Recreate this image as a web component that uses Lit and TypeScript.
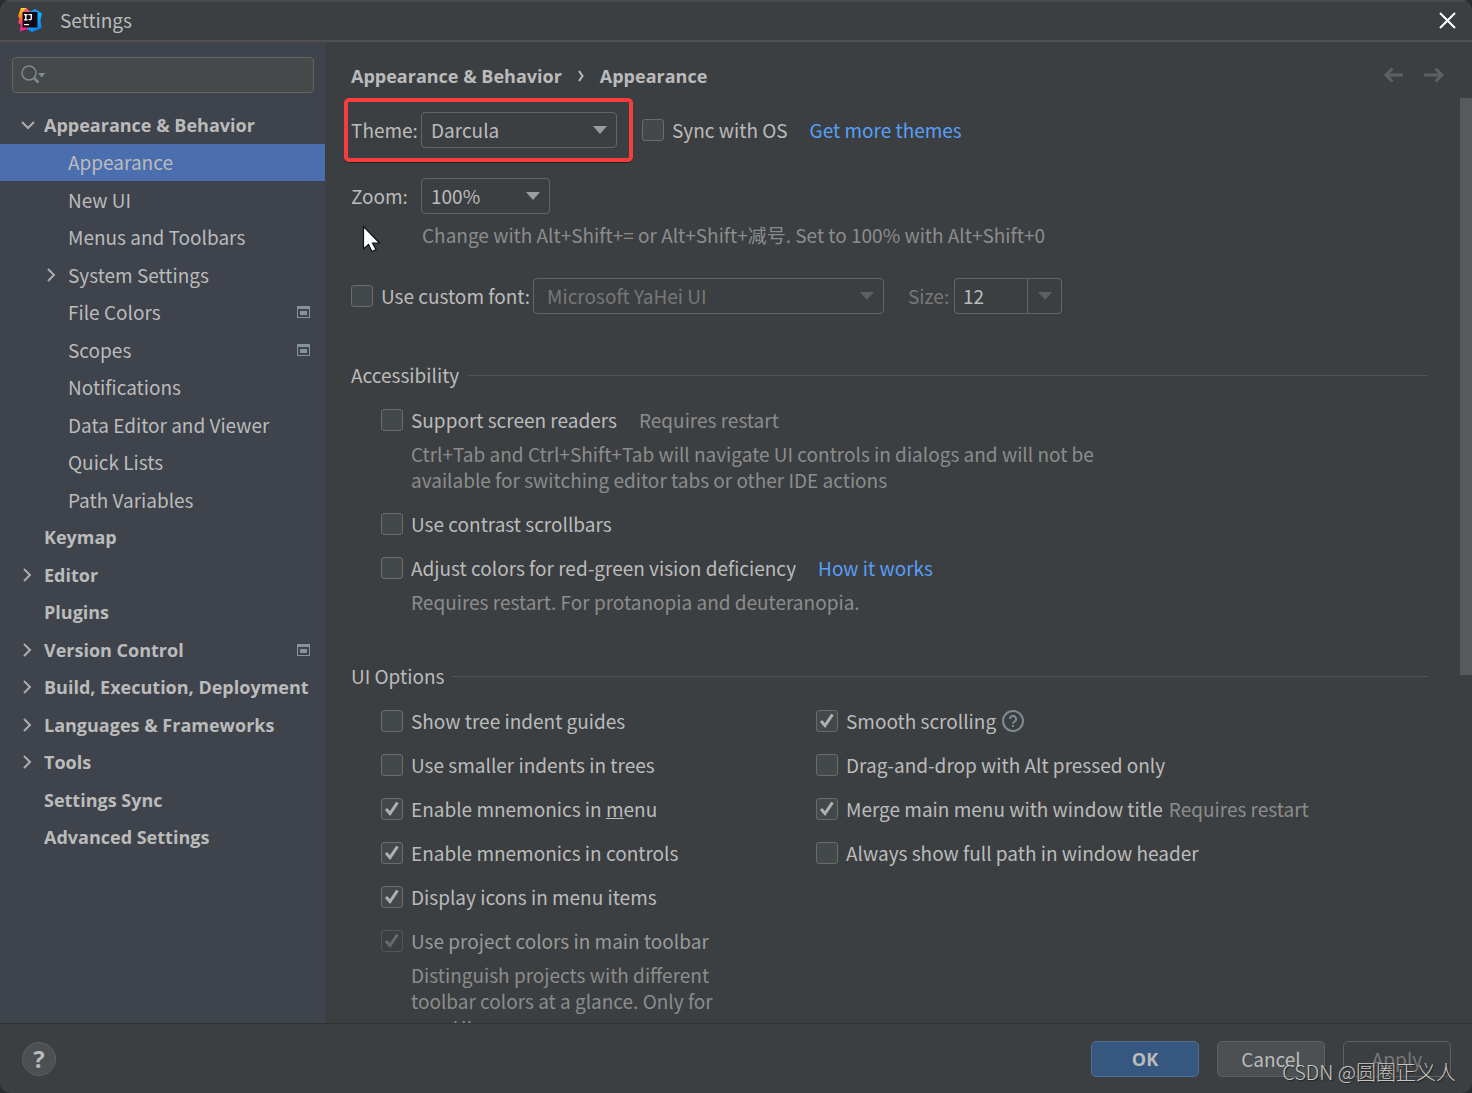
import { LitElement, html, css, svg, nothing, type TemplateResult } from "lit";
import { customElement, state } from "lit/decorators.js";
import { classMap } from "lit/directives/class-map.js";

interface TreeItem {
  label: string;
  child?: boolean;
  arrow?: "open" | "closed";
  project?: boolean;
}

const TREE: TreeItem[] = [
  { label: "Appearance & Behavior", arrow: "open" },
  { label: "Appearance", child: true },
  { label: "New UI", child: true },
  { label: "Menus and Toolbars", child: true },
  { label: "System Settings", child: true, arrow: "closed" },
  { label: "File Colors", child: true, project: true },
  { label: "Scopes", child: true, project: true },
  { label: "Notifications", child: true },
  { label: "Data Editor and Viewer", child: true },
  { label: "Quick Lists", child: true },
  { label: "Path Variables", child: true },
  { label: "Keymap" },
  { label: "Editor", arrow: "closed" },
  { label: "Plugins" },
  { label: "Version Control", arrow: "closed", project: true },
  { label: "Build, Execution, Deployment", arrow: "closed" },
  { label: "Languages & Frameworks", arrow: "closed" },
  { label: "Tools", arrow: "closed" },
  { label: "Settings Sync" },
  { label: "Advanced Settings" },
];

const logo = html`<svg class="logo" viewBox="0 0 24 24" aria-hidden="true">
  <defs>
    <linearGradient id="warm" x1="0" y1="0" x2="0" y2="1">
      <stop offset="0" stop-color="#fdd835" />
      <stop offset="0.35" stop-color="#fc801d" />
      <stop offset="0.6" stop-color="#ff3d6b" />
      <stop offset="1" stop-color="#fe2cc2" />
    </linearGradient>
    <linearGradient id="cool" x1="0" y1="0" x2="0.4" y2="1">
      <stop offset="0" stop-color="#3b7df0" />
      <stop offset="0.5" stop-color="#09b5ff" />
      <stop offset="1" stop-color="#0787f5" />
    </linearGradient>
  </defs>
  <path d="M3 0H8L12 4V22L7 21 2 23.500 3 17 0 14.500 1.500 11 0 8z" fill="url(#warm)" />
  <path d="M11 4 17 1l7 4.500L22.500 12 23.500 20 14 24 10 21.500z" fill="url(#cool)" />
  <path d="M3 17 9 19l2 1.500L7 21.500 2 23.500z" fill="#f62a8a" />
  <path d="M8 0 12 4 9 6 5 4z" fill="#fa4f7a" />
  <rect x="4.500" y="4" width="15" height="15.500" fill="#120a10" />
  <path d="M6 6h3.600v1.200H8.500v4H9.600v1.200H6v-1.200h1.100v-4H6z" fill="#fff" />
  <path d="M10.500 6H14v4.200c0 1.500-.8 2.200-2 2.200-.8 0-1.400-.3-1.900-.8l.8-.9c.3.300.6.400.9.400.500 0 .8-.3.800-.9V7.200h-2.100z" fill="#fff" />
  <rect x="6" y="16" width="5" height="1.200" fill="#fff" />
</svg>`;

const chevron = (open: boolean) => html`<svg class="chevron" viewBox="0 0 16 16" aria-hidden="true">
  ${open ? svg`<path d="M2 5 8 11 14 5" />` : svg`<path d="M4 2 10 8 4 14" />`}
</svg>`;

const projectIcon = html`<svg class="project" viewBox="0 0 13 12" role="img" aria-label="For current project">
  <path fill-rule="evenodd" d="M0 0h13v12H0zM1 3v8h11V3z" />
  <rect x="3" y="5" width="7" height="4" />
</svg>`;

const dropArrow = html`<svg class="drop" viewBox="0 0 14 8" aria-hidden="true"><path d="M0 0h14L7 8z" /></svg>`;

@customElement("app-root")
export class AppRoot extends LitElement {
  @state() private selected = "Appearance";

  static styles = css`
    :host {
      display: block;
      height: 100vh;
      min-height: 600px;
      position: relative;
      overflow: hidden;
      background: #2b2b2b;
      color: #bbbbbb;
      font: 19px/26px "Noto Sans CJK SC", "Open Sans", sans-serif;
    }
    *, *::before, *::after { box-sizing: border-box; }
    button, input, select { font: inherit; color: inherit; margin: 0; }
    button { padding: 0; border: 0; background: none; }
    a { color: #589df6; text-decoration: none; }
    svg { display: block; flex: none; }

    .window {
      height: 100%;
      display: grid;
      grid-template: 42px minmax(0, 1fr) 70px / 325px minmax(0, 1fr);
      background: #3c3f41;
      border-radius: 10px;
      overflow: hidden;
    }
    .titlebar {
      grid-column: 1 / -1;
      display: flex;
      align-items: center;
      gap: 18px;
      padding: 0 16px 2px 18px;
      border-top: 2px solid #4a4a4a;
      border-bottom: 2px solid #515151;
    }
    .titlebar h1 { flex: 1; margin: 0; font: inherit; }
    .logo { width: 24px; height: 24px; }
    .close { width: 17px; height: 17px; }
    .close svg { width: 17px; height: 17px; fill: none; stroke: #ffffff; stroke-width: 2; }

    .sidebar { background: #3e434c; padding-top: 15px; overflow: hidden; }
    .search {
      display: flex;
      align-items: center;
      height: 36px;
      margin: 0 11px 13px 12px;
      padding-left: 8px;
      border: 1px solid #646464;
      border-radius: 4px;
      background: #45494a;
    }
    .search svg { width: 25px; height: 20px; }
    .search input { flex: 1; min-width: 0; border: 0; outline: 0; background: none; }
    .tree {
      display: grid;
      grid-auto-rows: 1fr;
      height: 750px;
      margin: 0;
      padding: 0;
      list-style: none;
    }
    .node {
      display: flex;
      align-items: center;
      width: 100%;
      height: 100%;
      padding: 0 15px 0 20px;
      text-align: left;
      white-space: nowrap;
      font: 700 18px/26px "Open Sans", "Noto Sans", sans-serif;
    }
    .node.child { padding-left: 44px; font: inherit; }
    .node.selected { background: #4b6eaf; }
    .twist { flex: none; width: 24px; }
    .node .name { flex: 1; }
    .chevron { width: 16px; height: 16px; fill: none; stroke: #adadad; stroke-width: 2; }
    .project { width: 13px; height: 12px; fill: #87939a; }

    .main { display: flex; flex-direction: column; min-height: 0; }
    .crumbs {
      display: flex;
      align-items: center;
      height: 56px;
      padding: 12px 28px 0 26px;
      font: 700 18px/26px "Open Sans", "Noto Sans", sans-serif;
    }
    .crumbs svg { fill: none; }
    .crumbs .sep { width: 6px; height: 12px; margin: 0 16px; stroke: #bbbbbb; stroke-width: 2; }
    .crumbs .nav { display: flex; gap: 20px; margin-left: auto; }
    .crumbs .nav svg { width: 20px; height: 16px; stroke: #5e6060; stroke-width: 3; }
    .scroller { flex: 1; display: flex; min-height: 0; overflow: hidden; }
    .thumb { flex: none; width: 12px; height: 577px; background: #58595b; }
    .page { flex: 1; min-width: 0; padding: 14px 32px 0 26px; }

    .row { display: flex; align-items: center; height: 36px; margin-bottom: 30px; }
    .row.tight { margin-bottom: 8px; }
    .pair { position: relative; display: flex; align-items: center; }
    .pair > label { width: 70px; }
    .marker {
      position: absolute;
      inset: -14px -16px -14px -7px;
      border: 4px solid #f53d3d;
      border-radius: 5px;
      box-shadow: 0 1px 1px #222222;
      pointer-events: none;
    }
    .select { display: grid; align-items: center; height: 36px; }
    .select > * { grid-area: 1 / 1; }
    .select select {
      appearance: none;
      width: 100%;
      height: 36px;
      padding: 0 40px 0 9px;
      border: 1px solid #646464;
      border-radius: 4px;
      outline: 0;
      background: #3c3f41;
      opacity: 1;
    }
    .select select:disabled { color: #777777; padding-left: 13px; }
    .drop { width: 14px; height: 8px; fill: #9a9da0; pointer-events: none; }
    .select .drop { justify-self: end; margin-right: 10px; }
    .dim .drop, .spin .drop { fill: #5d5f60; }
    .w-theme { width: 196px; }
    .w-zoom { width: 129px; }
    .w-font { width: 351px; }
    .custom { width: 182px; }
    .sync { margin: 0 22px 0 25px; }
    .size { width: 70px; padding-left: 24px; color: #777777; }
    .spin {
      display: flex;
      width: 108px;
      height: 36px;
      border: 1px solid #646464;
      border-radius: 4px;
    }
    .spin input { flex: 1; min-width: 0; padding: 0 8px; border: 0; outline: 0; background: none; }
    .spin button { display: grid; place-items: center; width: 34px; border-left: 1px solid #646464; }
    .hint { margin: 8px 0 0; color: #8c8c8c; }
    .hint.zoom { margin: 0 0 30px 71px; }

    .check { display: flex; align-items: center; gap: 8px; white-space: nowrap; }
    .box { display: grid; flex: none; }
    .box > * { grid-area: 1 / 1; }
    .box input {
      appearance: none;
      width: 22px;
      height: 22px;
      border: 1px solid #6b6b6b;
      border-radius: 3px;
      background: #43494a;
    }
    .box input:disabled { border-color: #545556; background: #3c3f41; }
    .box svg {
      width: 22px;
      height: 22px;
      fill: none;
      stroke: #b0b0b0;
      stroke-width: 3;
      visibility: hidden;
      pointer-events: none;
    }
    .box input:checked + svg { visibility: visible; }
    .box input:disabled + svg { stroke: #66686a; }
    .off { color: #999999; }

    .section { display: flex; align-items: center; gap: 8px; margin: 48px 0 19px; font: inherit; }
    .section::after { content: ""; flex: 1; height: 1px; background: #515355; }
    .options { display: flex; flex-direction: column; gap: 18px; min-width: 0; padding-left: 30px; }
    .options .hint { padding-left: 30px; }
    .line { display: flex; align-items: center; height: 26px; gap: 22px; white-space: nowrap; }
    .line.near { gap: 6px; }
    .note { color: #8c8c8c; }
    .columns { display: grid; grid-template-columns: 435px minmax(0, 1fr); }
    .columns .options + .options { padding-left: 30px; }
    .narrow { max-width: 350px; }
    .info { width: 22px; height: 22px; }
    .info svg { width: 22px; height: 22px; fill: none; stroke: #7f8b91; stroke-width: 2; }

    .footer {
      grid-column: 1 / -1;
      display: flex;
      align-items: center;
      gap: 18px;
      padding: 0 21px 0 22px;
      border-top: 1px solid #2f3234;
    }
    .help {
      width: 34px;
      height: 34px;
      margin-right: auto;
      border: 1px solid #5e6060;
      border-radius: 50%;
      background: #4c5052;
      font: 700 24px/32px "Open Sans", sans-serif;
    }
    .btn {
      width: 108px;
      height: 36px;
      border: 1px solid #5e6060;
      border-radius: 5px;
      background: #4c5052;
    }
    .btn.primary {
      border-color: #4c708c;
      background: #365880;
      font: 700 18px/26px "Open Sans", "Noto Sans", sans-serif;
    }
    .btn:disabled { background: none; color: #777777; }

    .watermark {
      position: absolute;
      right: 16px;
      bottom: 8px;
      font-size: 20px;
      font-weight: 300;
      color: #c8c8c8;
      text-shadow: 1px 1px 1px #222222;
      pointer-events: none;
    }
    .cursor { position: absolute; left: 362px; top: 225px; width: 20px; height: 28px; pointer-events: none; }
  `;

  private check(label: unknown, on = false, disabled = false): TemplateResult {
    return html`<label class=${classMap({ check: true, off: disabled })}>
      <span class="box">
        <input type="checkbox" ?checked=${on} ?disabled=${disabled} />
        <svg viewBox="0 0 22 22" aria-hidden="true"><path d="M5 11 9 15.500 16.500 4.500" /></svg>
      </span>
      <span>${label}</span>
    </label>`;
  }

  private node(item: TreeItem): TemplateResult {
    const cls = { node: true, child: !!item.child, selected: item.label === this.selected };
    return html`<li>
      <button class=${classMap(cls)} @click=${() => (this.selected = item.label)}>
        <span class="twist">${item.arrow ? chevron(item.arrow === "open") : nothing}</span>
        <span class="name">${item.label}</span>
        ${item.project ? projectIcon : nothing}
      </button>
    </li>`;
  }

  render() {
    return html`
      <div class="window">
        <header class="titlebar">
          ${logo}
          <h1>Settings</h1>
          <button class="close" aria-label="Close">
            <svg viewBox="0 0 17 17"><path d="M1 1 16 16M16 1 1 16" /></svg>
          </button>
        </header>

        <nav class="sidebar">
          <label class="search">
            <svg viewBox="0 0 25 20" aria-hidden="true">
              <circle cx="8" cy="8" r="7" fill="none" stroke="#7f8b91" stroke-width="1.500" />
              <path d="M12.500 12.500 17.500 17.500" stroke="#7f8b91" stroke-width="2.500" />
              <path d="M17 8h7.500L20.700 12.500z" fill="#7f8b91" />
            </svg>
            <input type="text" aria-label="Search settings" />
          </label>
          <ul class="tree">${TREE.map((item) => this.node(item))}</ul>
        </nav>

        <main class="main">
          <div class="crumbs">
            <span>Appearance &amp; Behavior</span>
            <svg class="sep" viewBox="0 0 6 12" aria-hidden="true"><path d="M1 1 4.500 6 1 11" /></svg>
            <span>Appearance</span>
            <span class="nav">
              <button aria-label="Back" disabled>
                <svg viewBox="0 0 20 16"><path d="M19 7H3M8.500 .5 2 7l6.500 6.500" /></svg>
              </button>
              <button aria-label="Forward" disabled>
                <svg viewBox="0 0 20 16"><path d="M0 7h17M11.500 .5 18 7l-6.500 6.500" /></svg>
              </button>
            </span>
          </div>
          <div class="scroller">
            <div class="page">
              <div class="row">
                <div class="pair">
                  <label for="theme">Theme:</label>
                  <div class="select w-theme">
                    <select id="theme"><option>Darcula</option></select>${dropArrow}
                  </div>
                  <span class="marker"></span>
                </div>
                <span class="sync">${this.check("Sync with OS")}</span>
                <a href="#themes">Get more themes</a>
              </div>
              <div class="row tight">
                <div class="pair">
                  <label for="zoom">Zoom:</label>
                  <div class="select w-zoom">
                    <select id="zoom"><option>100%</option></select>${dropArrow}
                  </div>
                </div>
              </div>
              <p class="hint zoom">Change with Alt+Shift+= or Alt+Shift+减号. Set to 100% with Alt+Shift+0</p>
              <div class="row">
                <div class="custom">${this.check("Use custom font:")}</div>
                <div class="select dim w-font">
                  <select aria-label="Custom font" disabled><option>Microsoft YaHei UI</option></select>${dropArrow}
                </div>
                <label class="size" for="size">Size:</label>
                <div class="spin">
                  <input id="size" type="text" value="12" />
                  <button aria-label="Font sizes">${dropArrow}</button>
                </div>
              </div>

              <h2 class="section">Accessibility</h2>
              <div class="options">
                <div>
                  <div class="line">
                    ${this.check("Support screen readers")}<span class="note">Requires restart</span>
                  </div>
                  <p class="hint">
                    Ctrl+Tab and Ctrl+Shift+Tab will navigate UI controls in dialogs and will not be<br />available
                    for switching editor tabs or other IDE actions
                  </p>
                </div>
                <div class="line">${this.check("Use contrast scrollbars")}</div>
                <div>
                  <div class="line">
                    ${this.check("Adjust colors for red-green vision deficiency")}<a href="#vision">How it works</a>
                  </div>
                  <p class="hint">Requires restart. For protanopia and deuteranopia.</p>
                </div>
              </div>

              <h2 class="section">UI Options</h2>
              <div class="columns">
                <div class="options">
                  <div class="line">${this.check("Show tree indent guides")}</div>
                  <div class="line">${this.check("Use smaller indents in trees")}</div>
                  <div class="line">${this.check(html`Enable mnemonics in <u>m</u>enu`, true)}</div>
                  <div class="line">${this.check("Enable mnemonics in controls", true)}</div>
                  <div class="line">${this.check("Display icons in menu items", true)}</div>
                  <div>
                    <div class="line">${this.check("Use project colors in main toolbar", true, true)}</div>
                    <p class="hint narrow">
                      Distinguish projects with different toolbar colors at a glance. Only for new UI
                    </p>
                  </div>
                </div>
                <div class="options">
                  <div class="line near">
                    ${this.check("Smooth scrolling", true)}
                    <button class="info" aria-label="About smooth scrolling">
                      <svg viewBox="0 0 22 22">
                        <circle cx="11" cy="11" r="10" />
                        <path d="M8 9a3 3 0 1 1 4.500 2.500c-1 .6-1.500 1-1.500 2.200M11 15v2" />
                      </svg>
                    </button>
                  </div>
                  <div class="line">${this.check("Drag-and-drop with Alt pressed only")}</div>
                  <div class="line near">
                    ${this.check("Merge main menu with window title", true)}<span class="note">Requires restart</span>
                  </div>
                  <div class="line">${this.check("Always show full path in window header")}</div>
                </div>
              </div>
            </div>
            <div class="thumb"></div>
          </div>
        </main>

        <footer class="footer">
          <button class="help" aria-label="Help">?</button>
          <button class="btn primary">OK</button>
          <button class="btn">Cancel</button>
          <button class="btn" disabled>Apply</button>
        </footer>
      </div>
      <svg class="cursor" viewBox="0 0 20 28" aria-hidden="true">
        <path d="M1.500 1.500v22.500l5-4.500 3.500 7 4-2-3.500-6.500h7z" fill="#fff" stroke="#111" stroke-width="1.200" />
      </svg>
      <span class="watermark">CSDN @圆圈正义人</span>
    `;
  }
}
